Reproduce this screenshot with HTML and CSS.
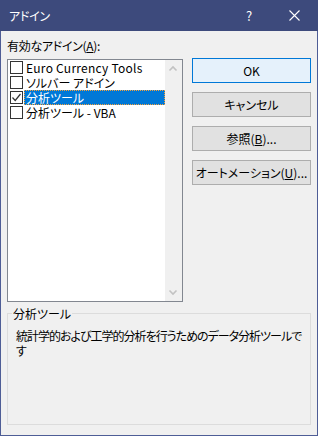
FILE: index.html
```html
<!DOCTYPE html>
<html lang="ja">
<head>
<meta charset="utf-8">
<title>アドイン</title>
<link rel="stylesheet" href="styles.css">
</head>
<body>
<div class="win">
  <div class="titlebar">
    <span class="title">アドイン</span>
    <span class="help">?</span>
    <svg class="close" width="11" height="11" viewBox="0 0 11 11"><path d="M0.5 0.5 L10.5 10.5 M10.5 0.5 L0.5 10.5" stroke="#fff" stroke-width="1.1" fill="none"/></svg>
  </div>
  <div class="content">
    <div class="main">
      <div class="leftcol">
        <div class="label">有効なアドイン(<u>A</u>):</div>
        <div class="listbox">
          <div class="items">
            <div class="row"><span class="cb"></span><span class="txt latin">Euro Currency Tools</span></div>
            <div class="row"><span class="cb"></span><span class="txt">ソルバー アドイン</span></div>
            <div class="row"><span class="cb"><svg width="11" height="11" viewBox="0 0 11 11"><path d="M1.5 5.5 L4.2 8.5 L9.5 2" stroke="#333" stroke-width="1.2" fill="none"/></svg></span><span class="txt sel">分析ツール</span></div>
            <div class="row"><span class="cb"></span><span class="txt">分析ツール - VBA</span></div>
          </div>
          <div class="scroll">
            <svg class="arrow" width="17" height="17" viewBox="0 0 17 17"><path d="M4.5 10.5 L8 7 L11.5 10.5" stroke="#c2c2c2" stroke-width="1.6" fill="none"/></svg>
            <svg class="arrow" width="17" height="17" viewBox="0 0 17 17"><path d="M4.5 6.5 L8 10 L11.5 6.5" stroke="#c2c2c2" stroke-width="1.6" fill="none"/></svg>
          </div>
        </div>
      </div>
      <div class="rightcol">
        <button class="btn default">OK</button>
        <button class="btn">キャンセル</button>
        <button class="btn">参照(<u>B</u>)...</button>
        <button class="btn">オートメーション(<u>U</u>)...</button>
      </div>
    </div>
    <fieldset class="group">
      <legend class="legend">分析ツール</legend>
      <div class="desc">統計学的および工学的分析を行うためのデータ分析ツールです</div>
    </fieldset>
  </div>
</div>
</body>
</html>
```
FILE: styles.css
```css
* { box-sizing: border-box; }
html, body { margin: 0; padding: 0; background: #f0f0f0; }
body {
  font-family: "Noto Sans CJK JP", sans-serif;
  font-size: 12px;
  font-feature-settings: "palt";
  color: #000;
}
.win {
  width: 318px;
  height: 436px;
  border: 1px solid #4e5d96;
  border-top: none;
  background: #f0f0f0;
  display: flex;
  flex-direction: column;
}
.titlebar {
  height: 31px;
  margin: 0 -1px;
  background: #3d4a7c;
  color: #fff;
  display: flex;
  align-items: center;
  padding-left: 9px;
  line-height: 31px;
}
.title { flex: 1; letter-spacing: -0.3px; }
.help { width: 6px; margin-right: 37px; font-size: 13px; }
.close { margin-right: 18px; }
.content {
  padding: 0 6px;
  flex: 1;
  display: flex;
  flex-direction: column;
}
.main { display: flex; }
.leftcol { width: 176px; }
.label { padding-top: 7px; line-height: 15px; height: 28px; letter-spacing: -0.3px; }
.listbox {
  height: 243px;
  border: 1px solid #828790;
  background: #fff;
  display: flex;
}
.items { flex: 1; padding-left: 2px; }
.row { display: flex; height: 15px; line-height: 15px; }
.cb {
  width: 13px;
  height: 13px;
  margin-top: 1px;
  border: 1px solid #333;
  background: #fff;
  display: flex;
  align-items: center;
  justify-content: center;
}
.txt { flex: 1; padding-left: 2px; margin-left: 1px; white-space: nowrap; }
.latin { letter-spacing: 0.25px; }
.sel {
  background: #0078d7;
  color: #fff;
  outline: 1px dotted #f7a23a;
  outline-offset: -1px;
}
.scroll {
  width: 17px;
  background: #f0f0f0;
  display: flex;
  flex-direction: column;
  justify-content: space-between;
}
.arrow { display: block; }
.rightcol {
  margin-left: 9px;
  padding-top: 27px;
  display: flex;
  flex-direction: column;
  gap: 9px;
}
.btn {
  width: 119px;
  height: 25px;
  border: 1px solid #adadad;
  background: #e1e1e1;
  font: inherit;
  font-feature-settings: "palt";
  color: #000;
  padding: 0;
  line-height: 23px;
}
.btn.default { border-color: #0078d7; background: #e5f1fb; }
.group {
  margin: 4px 0 0;
  height: 119px;
  border: 1px solid #dcdcdc;
  padding: 0 4px 0 8px;
}
.legend {
  padding: 0 1px;
  margin-left: -4px;
  line-height: 15px;
}
.desc { padding-top: 7px; line-height: 15px; letter-spacing: -1px; }
```
